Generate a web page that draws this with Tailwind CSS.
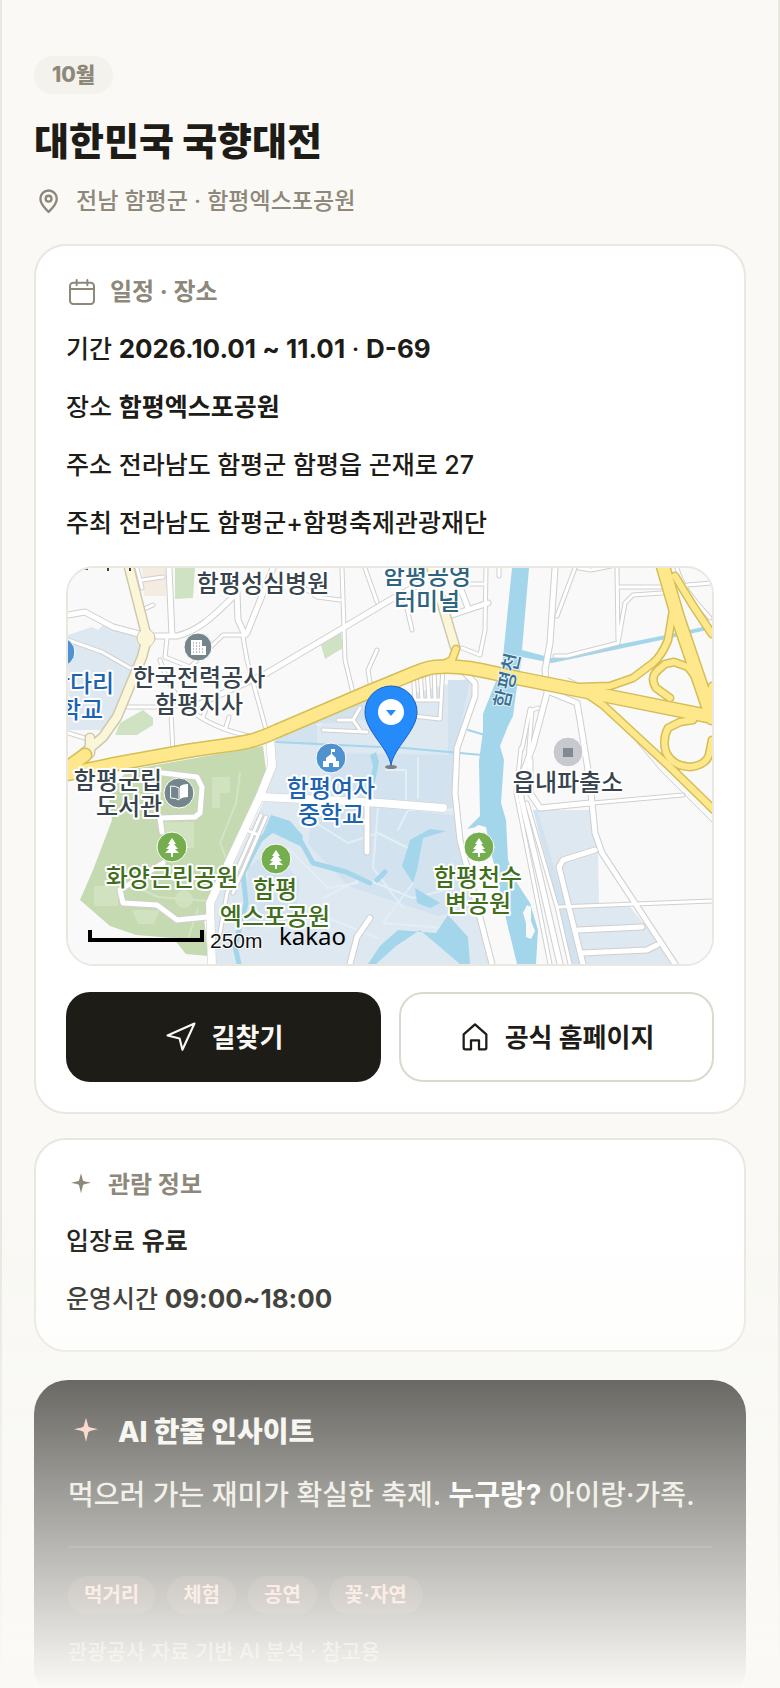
<!DOCTYPE html>
<html lang="ko">
<head>
    <meta charset="UTF-8">
    <meta name="viewport" content="width=device-width, initial-scale=1.0">
    <title>대한민국 국향대전</title>
    <script src="https://cdn.jsdelivr.net/npm/@tailwindcss/browser@4"></script>
</head>
<body class="bg-[#faf9f5] text-[#1d1c17] font-['Inter','Noto_Sans_CJK_KR',sans-serif]">
    <main class="h-screen overflow-hidden border-x-2 border-[#e9e7e0] px-8 pt-14">
        <header>
            <span class="inline-flex h-[38px] items-center rounded-full bg-[#f3f2ed] px-[18px] text-[21px] font-extrabold text-[#8d887a] align-top">10월</span>
            <h1 class="mt-6 text-[38px] leading-[46px] font-extrabold">대한민국 국향대전</h1>
            <p class="mt-[22px] flex h-[30px] items-center gap-3.5 text-[23px] font-medium text-[#8d887a]">
                <svg class="size-7" viewBox="0 0 24 24" fill="none" stroke="currentColor" stroke-width="2" stroke-linejoin="round">
                    <path d="M12.500 21.300s7-6 7-11.300a7 7 0 1 0-14 0c0 5.300 7 11.300 7 11.300z"/>
                    <circle cx="12.500" cy="10" r="2.500"/>
                </svg>
                <span>전남 함평군 · 함평엑스포공원</span>
            </p>
        </header>

        <!-- schedule and place -->
        <section class="mt-7 rounded-[32px] border-2 border-[#e9e7e0] bg-white p-[30px]">
            <h2 class="flex h-8 items-center gap-3 text-2xl font-bold text-[#8d887a]">
                <svg class="size-8" viewBox="0 0 24 24" fill="none" stroke="currentColor" stroke-width="1.5" stroke-linecap="round">
                    <rect x="3" y="5" width="18" height="16" rx="2.500"/>
                    <path d="M3 9.700h18M8 3v4M16 3v4"/>
                </svg>
                일정 · 장소
            </h2>
            <div class="mt-5 flex flex-col gap-4 text-[25px] leading-[42px] font-medium">
                <p>기간 <b class="text-[26px]">2026.10.01 ~ 11.01</b> · <b class="text-[26px]">D-69</b></p>
                <p>장소 <b>함평엑스포공원</b></p>
                <p>주소 전라남도 함평군 함평읍 곤재로 27</p>
                <p>주최 전라남도 함평군+함평축제관광재단</p>
            </div>

            <div class="mt-[22px] h-[400px] overflow-hidden rounded-[28px] border-2 border-[#e9e7e0]">
                <svg class="h-full w-full" viewBox="0 0 644 396" preserveAspectRatio="xMidYMid slice" fill="none" stroke-linecap="round" stroke-linejoin="round">
                    <defs>
                        <g id="lanes">
                            <path d="M74 42l11-5M69 0l5 20M74 12l21-3M99 70l-2 19 25 10 33-32h20M0 72l34 12 28 16M175 69l4 23 20 73M103 145l2 40M59 139h43l16-3M92 92c12 40 35 65 93 77M158 159l3-10M135 149l3-8"/>
                            <path d="M274 0l3 92 8 33M225 12l24 17 23 3M297 0l12 34M309 82l-9 20 2 13M418 0l-1 62-5 25-18-7M402 16h15M337 32l7 30M431 0v8"/>
                            <path d="M507 0l-18 48M549 0l1 72M487 88h12l51-13 7-40 8-8 29-2M552 19h47M609 0c5 20 20 35 33 50M619 17l25-2M511 0l12 2 20-4"/>
                            <path d="M470 140l-6 2-4 50M459 235l30 104 13 57M490 339l154-6M525 235l90-8M453 180l-5 45 8 40 26 131"/>
                            <path d="M193 247l-34 78-7 40M198 249l-33 76M178 262l10 4M255 162l44 2M270 152h15l7-12M285 152l7 10M332 109l40-15 3 5-3 52-27-3M345 104l2 28h26M352 101l2 31M359 99l2 33M366 97l1 35M0 165l20 6M462 141l-8 40"/>
                        </g>
                        <g id="streets">
                            <path d="M101 0l3 68M169 25l1 27 7 15M205 0l-26 65M74 68h35c24-6 38-22 56-39M0 47l17-3 28 15 30 8M125 139l74-34 76-45 47-28 28-15"/>
                            <path d="M384 47l36-12M392 19l8 21M487 0l-5 75-5 27 2 23-14 53-12 32v20l19 79 20 87M482 124l27 11 3 17 8 50 3 23 4 40 7 20 73 111"/>
                            <path d="M397 105l10 10v13l-18 52-2 45 5 47 32 124M299 239v45M302 350l-13 19-7 27M95 205l34 4 5 10-2 26-5 4-35 1 2 14M95 295l-43 27 3 13 34 2 20 15 30-3"/>
                            <path d="M462 192v33l10 15 50-5M527 282l-32 10-4 7 24 97M510 362l64-3M514 385l65-3 10-5"/>
                        </g>
                        <g id="avenues">
                            <path d="M202 168l2 30-12 30-50 107 2 64M192 229l67 3 53 3 63 5"/>
                        </g>
                        <g id="pale">
                            <path d="M60-5l19 75-5 19-25 60-14 20-26 22M362-5l25 84M22 185v-15"/>
                        </g>
                        <g id="ramps">
                            <path d="M603 15l2 27-5 30c-4 10-9 18-15 23l-20 15-23 8-30 1M607 8l17 28 20 30M388 81l-4 11-12 6M602 130l-14-10q-6-10 1-17l8-7 9-2 14 5 12 16 6 14M625 152l-13 2-12 6q-6 12-2 24 6 14 24 15 16-2 19-12l3-15M644 118l-4 16M512 121l23 16 67 62 44 43"/>
                        </g>
                        <g id="highways">
                            <path d="M-5 207l47-10 77-14c50-8 60-6 90-20l96-41c40-16 50-22 62-23 30-2 50 4 72 9l86 17 125 25M594-5l16 55 34 100M-5 203l22-16"/>
                        </g>
                        <path id="tree" fill="#fff" d="M0-9L4-3H2L6 2H3L7 6H1V10H-1V6H-7L-3 2H-6L-2-3H-4Z"/>
                    </defs>

                    <rect width="644" height="396" fill="#f9f9f9"/>
                    <!-- blocks -->
                    <g fill="#dde8f1">
                        <path d="M0 67l24-8 6 3 5-5 35 10 5 15-23 70-17 10-35 0zM465 242h57l8 40 1 53 31 4 48 57h-95zM208 172l114-40 83-23 2 16-17 54v80l22 93 12 44H142l-2-47 55-114z"/>
                    </g>
                    <g fill="#d2e3ef">
                        <path d="M208 162l96-40-5 30-50 4v22l-41-5zM380 112h22l-13 66-3 62h-60l-70-5v-50l124 2zM245 240l65-2 80 10 20 90-40 10-90-30-40-42zM180 300l22-18 30 30-5 40-50 10zM465 242l4 0 46 154h-12l-14-60z"/>
                    </g>
                    <g stroke="#e3eef5" stroke-width="2">
                        <path d="M240 250l40 25 30-10 40 20M255 330l40-20 50 20 40-10M200 360l60-10 50 20M310 240l-5 60 30 40M330 262l10-20 50 0M220 280l40 40 30-5M345 315l-30 40 60 5 20-30M318 202l20 0 0 30M350 190l0 40"/>
                    </g>
                    <path fill="#f5ece1" d="M74 0h24v28H76z"/>
                    <g fill="#cfe2c3">
                        <path d="M107 0h20l-2 30-18 1zM253 77l20-12 2 15-18 11zM52 155l23-13 10 8v7l-16 10H47z"/>
                    </g>
                    <path fill="#c5dab0" d="M60 202l135-24 3 24-8 26-40 87-14 35 4 38-22-2-13-16-37-3-26-9-30-26 13-30 13-34 6-16-4-27z"/>
                    <g fill="#d0e2bf">
                        <path d="M144 209h18v16h-10v15h-8zM96 254h30v26H96zM26 318h24v20H26zM64 342h28l-6 14H70z"/>
                        <circle cx="116" cy="331" r="9"/>
                    </g>
                    <path stroke="#d3e3c5" stroke-width="2" d="M172 205l-4 30-16 40 8 20M60 315l30 14 50 4M130 341l-10 30"/>

                    <!-- water -->
                    <g fill="#a3d6eb">
                        <path d="M444 0h17l-7 82 30 8 114-23 46-10v4l-46 10-114 24-30-6-6 36-3 23-5 10-8 20 4 14-3 43 5 17 2 40 9 23 13 20 8 27-2 34h-19l-10-41-14-63-12-34-14 3 13-13-1-55 4-30v-17l9-23 10-24z"/>
                        <path d="M203 247l19 6 13 15-3 10-27-13-13 8zM378 263l-23 7-6 32-4 13-11-17 8-26 20-11zM347 320l25 15-10 5-13-5zM380 347l20 22 2 27h-10l-40-34-24 16-20 18h-8l12-18 18-16 38 3z"/>
                        <path d="M240 179l6-3 3 10-4 20h-5l3-16z" transform="translate(62 8)"/>
                    </g>
                    <g stroke="#a3d6eb">
                        <path stroke-width="5" d="M171 396l-4-18 11-43-3-30 17-33 16-14M232 272l13 23 33 9 24 11M309 312l8-8"/>
                        <path stroke-width="2" d="M208 174l104 5M325 179l89 8M400 162l17 5"/>
                    </g>
                    <path fill="#f9f9f9" d="M459 337l4 2v14l4 10-4 8-5-2v-14l-3-10z"/>
                    <path fill="#f9f9f9" d="M402 263l8-6 8 2 8 40-18-10z"/>

                    <!-- roads: casing first, surface over it -->
                    <use href="#lanes" stroke="#d0d0d0" stroke-width="5"/>
                    <use href="#streets" stroke="#cfcfcf" stroke-width="7"/>
                    <use href="#avenues" stroke="#cfcfcf" stroke-width="9"/>
                    <use href="#lanes" stroke="#fff" stroke-width="3"/>
                    <use href="#streets" stroke="#fff" stroke-width="5"/>
                    <use href="#avenues" stroke="#fff" stroke-width="8"/>
                    <path stroke="#d0d0d0" d="M500 110l25 12 67 80 52 52"/>
                    <use href="#pale" stroke="#cfc8b0" stroke-width="11"/>
                    <circle cx="78" cy="70" r="9" fill="#fbf6d8" stroke="#cfc8b0"/>
                    <use href="#pale" stroke="#fbf6d8" stroke-width="8"/>
                    <use href="#ramps" stroke="#d4be55" stroke-width="9"/>
                    <use href="#highways" stroke="#d4be55" stroke-width="15"/>
                    <use href="#ramps" stroke="#ffe88b" stroke-width="6"/>
                    <use href="#highways" stroke="#ffe88b" stroke-width="12"/>

                    <!-- place symbols -->
                    <g stroke="#fff" stroke-width="1">
                        <circle cx="130" cy="79" r="14" fill="#75858c"/>
                        <circle cx="111" cy="225" r="15" fill="#75858c"/>
                        <circle cx="263" cy="190" r="15" fill="#4f92d0"/>
                        <circle cx="-8" cy="84" r="15" fill="#4f92d0"/>
                        <circle cx="500" cy="184" r="15" fill="#c8c9cf"/>
                        <circle cx="104" cy="279" r="15" fill="#74ae4f"/>
                        <circle cx="208" cy="291" r="15" fill="#74ae4f"/>
                        <circle cx="411" cy="279" r="15" fill="#74ae4f"/>
                    </g>
                    <path fill="#fff" d="M123 72h11v6h4v9h-15z"/>
                    <path stroke="#75858c" stroke-dasharray="1 2" stroke-linecap="butt" d="M125 75h8M125 78h8M125 81h12M125 84h12"/>
                    <path fill="#fff" d="M112 218q3-2 8-2v13q-5 0-8 2z"/>
                    <path stroke="#fff" d="M103 218q5 0 8 2v12q-3-2-8-2z"/>
                    <path fill="#fff" d="M263 181h4v3h-3v2l4 4v3h3v6h-6v-4h-4v4h-6v-6h3v-3l5-4z"/>
                    <path fill="#7f8b91" d="M495 180h10v9h-10z"/>
                    <use href="#tree" x="104" y="279"/>
                    <use href="#tree" x="208" y="291"/>
                    <use href="#tree" x="411" y="279"/>
                    <path stroke="#4b3b35" stroke-width="2" stroke-linecap="butt" d="M40 0v3M62 0v3M14 1h6"/>

                    <!-- labels with white halo -->
                    <g class="font-['Noto_Sans_CJK_KR',sans-serif] text-[24px] font-medium" text-anchor="middle" stroke="#fff" stroke-width="4" paint-order="stroke">
                        <g fill="#37444d">
                            <text x="195" y="24">함평성심병원</text>
                            <text x="131" y="118">한국전력공사</text>
                            <text x="131" y="145">함평지사</text>
                            <text x="50" y="221">함평군립</text>
                            <text x="61" y="247">도서관</text>
                            <text x="500" y="223">읍내파출소</text>
                        </g>
                        <g fill="#2f6480">
                            <text x="359" y="16">함평공영</text>
                            <text x="359" y="42">터미널</text>
                        </g>
                        <g fill="#1c64b0">
                            <text x="-9" y="124">함평학다리</text>
                            <text x="-9" y="150">고등학교</text>
                            <text x="263" y="229">함평여자</text>
                            <text x="263" y="255">중학교</text>
                        </g>
                        <g fill="#3f6e1d">
                            <text x="104" y="318">화양근린공원</text>
                            <text x="207" y="330">함평</text>
                            <text x="207" y="357">엑스포공원</text>
                            <text x="410" y="318">함평천수</text>
                            <text x="410" y="344">변공원</text>
                        </g>
                    </g>
                    <text class="font-['Noto_Sans_CJK_KR',sans-serif] text-[20px] font-medium" transform="translate(446 114) rotate(-77)" text-anchor="middle" fill="#3a6f93" stroke="#e3f2f8" stroke-width="2" paint-order="stroke">함평천</text>

                    <!-- pin -->
                    <ellipse cx="323" cy="199" rx="6" ry="2" fill="#555" opacity=".7"/>
                    <path fill="#258bfb" stroke="#1c5fc0" d="M323 197c-3-18-26-34-26-53a26 26 0 0 1 52 0c0 19-23 35-26 53z"/>
                    <circle cx="323" cy="144" r="13" fill="#fff"/>
                    <path fill="#258bfb" d="M318 142h10l-5 6z"/>

                    <!-- scale bar -->
                    <path stroke="#000" stroke-width="4" stroke-linecap="butt" stroke-linejoin="miter" d="M22 362v10h112v-10"/>
                    <text class="font-['Liberation_Sans',sans-serif] text-[21px]" x="142" y="380" fill="#111" stroke="#fff" stroke-width="2" paint-order="stroke">250m</text>
                    <text class="font-['Noto_Sans',sans-serif] text-[24px]" x="211" y="377" fill="#000">kakao</text>
                </svg>
            </div>

            <div class="mt-[26px] grid grid-cols-2 gap-[18px] text-[26px] font-bold">
                <button class="flex h-[90px] items-center justify-center gap-3.5 rounded-3xl bg-[#1d1c17] text-[#faf9f5]">
                    <svg class="size-[34px]" viewBox="0 0 24 24" fill="none" stroke="currentColor" stroke-width="1.5" stroke-linejoin="round">
                        <path d="M2.500 11L21.500 2.500L13 21L11 13Z"/>
                    </svg>
                    길찾기
                </button>
                <button class="flex h-[90px] items-center justify-center gap-3.5 rounded-3xl border-2 border-[#dbd9cf] bg-white">
                    <svg class="size-8" viewBox="0 0 24 24" fill="none" stroke="currentColor" stroke-width="1.7" stroke-linejoin="round">
                        <path d="M3.500 10L12 2.500L20.500 10V20a1.200 1.200 0 0 1-1.200 1.200H15V14.500H9V21.200H4.700A1.200 1.200 0 0 1 3.500 20Z"/>
                    </svg>
                    공식 홈페이지
                </button>
            </div>
        </section>

        <!-- visitor info -->
        <section class="mt-6 rounded-[32px] border-2 border-[#e9e7e0] bg-white p-[30px]">
            <h2 class="flex h-[30px] items-center gap-3 text-2xl font-bold text-[#8d887a]">
                <svg class="size-[30px]" viewBox="0 0 24 24" fill="currentColor">
                    <path d="M12 2.500L13.600 8.400Q14 9 20 10.200Q14 11.400 13.600 12L12 18.500L10.400 12Q10 11.400 4 10.200Q10 9 10.400 8.400Z"/>
                </svg>
                관람 정보
            </h2>
            <div class="mt-5 flex flex-col gap-4 text-[25px] leading-[42px] font-medium">
                <p>입장료 <b>유료</b></p>
                <p>운영시간 <b class="text-[26px]">09:00~18:00</b></p>
            </div>
        </section>

        <!-- AI insight -->
        <section class="mt-7 rounded-[34px] bg-[#1d1c17] p-[34px]">
            <h2 class="flex h-9 items-center gap-3.5 text-[28px] font-extrabold text-[#f5f4ef]">
                <svg class="size-9" viewBox="0 0 24 24" fill="#ffbfac">
                    <path d="M12 2.500L13.600 8.400Q14 9 20 10.200Q14 11.400 13.600 12L12 18.500L10.400 12Q10 11.400 4 10.200Q10 9 10.400 8.400Z"/>
                </svg>
                AI 한줄 인사이트
            </h2>
            <p class="mt-6 text-[28px] leading-[42px] font-medium text-[#e6e4dc]">먹으러 가는 재미가 확실한 축제. <b class="text-white">누구랑?</b> 아이랑·가족.</p>
            <ul class="mt-[30px] flex gap-3 border-t-2 border-white/12 pt-7 text-xl font-bold text-[#ffbfac]">
                <li class="flex h-[38px] items-center rounded-full bg-[#ffb09a]/15 px-4">먹거리</li>
                <li class="flex h-[38px] items-center rounded-full bg-[#ffb09a]/15 px-4">체험</li>
                <li class="flex h-[38px] items-center rounded-full bg-[#ffb09a]/15 px-4">공연</li>
                <li class="flex h-[38px] items-center rounded-full bg-[#ffb09a]/15 px-4">꽃·자연</li>
            </ul>
            <p class="mt-[23px] text-[21px] leading-[30px] font-medium text-[#a8a496]">관광공사 자료 기반 AI 분석 · 참고용</p>
        </section>
    </main>
    <div class="pointer-events-none fixed inset-x-0 bottom-0 h-[472px] bg-linear-to-b from-[#faf9f5]/0 to-[#faf9f5]"></div>
</body>
</html>
